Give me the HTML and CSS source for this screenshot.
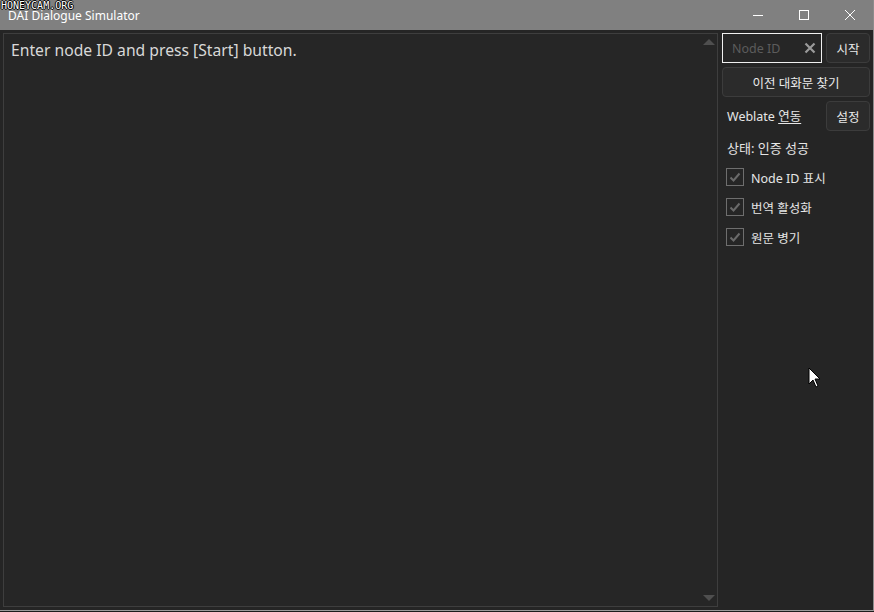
FILE: index.html
```html
<!DOCTYPE html>
<html lang="ko">
<head>
    <meta charset="UTF-8">
    <title>DAI Dialogue Simulator</title>
    <link rel="stylesheet" href="styles.css">
</head>
<body>

<div class="window">
    <div class="titlebar">
        <span class="watermark">HONEYCAM.ORG</span>
        <span class="title">DAI Dialogue Simulator</span>
        <div class="controls">
            <span class="ctl">
                <svg width="12" height="12" viewBox="0 0 12 12"><path d="M1 6.5h10" stroke="#fff" stroke-width="1"/></svg>
            </span>
            <span class="ctl">
                <svg width="12" height="12" viewBox="0 0 12 12"><rect x="1.5" y="1.5" width="9" height="9" fill="none" stroke="#fff" stroke-width="1"/></svg>
            </span>
            <span class="ctl">
                <svg width="12" height="12" viewBox="0 0 12 12"><path d="M1 1l10 10M11 1L1 11" stroke="#fff" stroke-width="1"/></svg>
            </span>
        </div>
    </div>

    <div class="content">
        <div class="output">
            <p class="output-text">Enter node ID and press [Start] button.</p>
            <div class="scroll">
                <span class="arrow up"></span>
                <span class="arrow down"></span>
            </div>
        </div>

        <div class="side">
            <div class="row">
                <div class="input">
                    <span class="placeholder">Node ID</span>
                    <svg class="clear" width="12" height="12" viewBox="0 0 12 12"><path d="M1.5 1.5l9 9M10.5 1.5l-9 9" stroke="#9a9a9a" stroke-width="2.2"/></svg>
                </div>
                <button class="btn small">시작</button>
            </div>
            <button class="btn wide">이전 대화문 찾기</button>
            <div class="row">
                <span class="label">Weblate <u>연동</u></span>
                <button class="btn small">설정</button>
            </div>
            <div class="status">상태: 인증 성공</div>
            <label class="check"><span class="box"><svg width="14" height="14" viewBox="0 0 14 14"><path d="M2.5 7.5l3 3 6-7" fill="none" stroke="#6a6a6a" stroke-width="2"/></svg></span>Node ID 표시</label>
            <label class="check"><span class="box"><svg width="14" height="14" viewBox="0 0 14 14"><path d="M2.5 7.5l3 3 6-7" fill="none" stroke="#6a6a6a" stroke-width="2"/></svg></span>번역 활성화</label>
            <label class="check"><span class="box"><svg width="14" height="14" viewBox="0 0 14 14"><path d="M2.5 7.5l3 3 6-7" fill="none" stroke="#6a6a6a" stroke-width="2"/></svg></span>원문 병기</label>
        </div>
    </div>

    <svg class="cursor" width="14" height="22" viewBox="0 0 14 22"><path d="M1 1v16l4-4 3 7 2-1-3-7h5z" fill="#fff" stroke="#000" stroke-width="1"/></svg>
</div>

</body>
</html>
```

FILE: styles.css
```css
body {
    margin: 0;
    background: #1c1c1c;
    font-family: "Noto Sans", "Noto Sans CJK KR", sans-serif;
    overflow: hidden;
}
.window {
    position: relative;
    width: 873px;
    height: 610px;
    background: #252525;
    border-right: 1px solid #8c8c8c;
    border-bottom: 1px solid #9a9a9a;
    display: flex;
    flex-direction: column;
}
.titlebar {
    position: relative;
    height: 30px;
    background: #808080;
    display: flex;
    align-items: center;
    flex-shrink: 0;
}
.title {
    margin-left: 8px;
    color: #fff;
    font-size: 12px;
}
.watermark {
    position: absolute;
    left: 1px;
    top: 0;
    font-family: "DejaVu Sans Mono", monospace;
    font-size: 10px;
    line-height: 11px;
    color: #fff;
    text-shadow: 1px 0 #000, -1px 0 #000, 0 1px #000, 0 -1px #000;
}
.controls {
    margin-left: auto;
    display: flex;
    height: 30px;
}
.ctl {
    width: 46px;
    display: flex;
    align-items: center;
    justify-content: center;
}
.content {
    flex: 1;
    display: flex;
    gap: 4px;
    padding: 3px 3px 3px 3px;
    min-height: 0;
}
.output {
    position: relative;
    width: 713px;
    border: 1px solid #3e3e3e;
    background: #262626;
}
.output-text {
    margin: 0;
    padding: 6px 7px;
    color: #d8d8d8;
    font-size: 15.7px;
    line-height: 20px;
}
.scroll {
    position: absolute;
    right: 0;
    top: 0;
    bottom: 0;
    width: 16px;
}
.arrow {
    position: absolute;
    left: 2px;
    width: 0;
    height: 0;
    border-left: 6px solid transparent;
    border-right: 6px solid transparent;
}
.arrow.up {
    top: 5px;
    border-bottom: 6px solid #4f4f4f;
}
.arrow.down {
    bottom: 5px;
    border-top: 6px solid #4f4f4f;
}
.side {
    width: 148px;
    flex-shrink: 0;
    display: flex;
    flex-direction: column;
    gap: 4px;
    color: #e6e6e6;
    font-size: 12.5px;
}
.row {
    display: flex;
    align-items: center;
    justify-content: space-between;
    height: 30px;
    gap: 4px;
}
.input {
    box-sizing: border-box;
    width: 100px;
    height: 30px;
    border: 1px solid #f0f0f0;
    background: #262626;
    display: flex;
    align-items: center;
    padding: 0 5px 0 9px;
}
.placeholder {
    color: #5c5c5c;
    font-size: 12.5px;
}
.clear {
    margin-left: auto;
}
.btn {
    box-sizing: border-box;
    height: 30px;
    background: #2b2b2b;
    border: 1px solid #3c3c3c;
    border-radius: 4px;
    color: #eaeaea;
    font-family: inherit;
    font-size: 12.5px;
    padding: 0;
}
.btn.small {
    width: 44px;
}
.btn.wide {
    width: 148px;
    height: 30px;
}
.label {
    padding-left: 5px;
    margin-top: -1px;
}
.label u {
    text-underline-offset: 2px;
}
.status {
    height: 30px;
    line-height: 30px;
    padding-left: 5px;
    margin-top: -2px;
    font-size: 13px;
}
.check {
    display: flex;
    align-items: center;
    gap: 7px;
    height: 30px;
    margin-top: -5px;
    padding-left: 4px;
}
.check + .check {
    margin-top: -4px;
}
.box {
    box-sizing: border-box;
    width: 18px;
    height: 18px;
    border: 1px solid #6e6e6e;
    display: flex;
    align-items: center;
    justify-content: center;
}
.cursor {
    position: absolute;
    left: 808px;
    top: 367px;
}
```
